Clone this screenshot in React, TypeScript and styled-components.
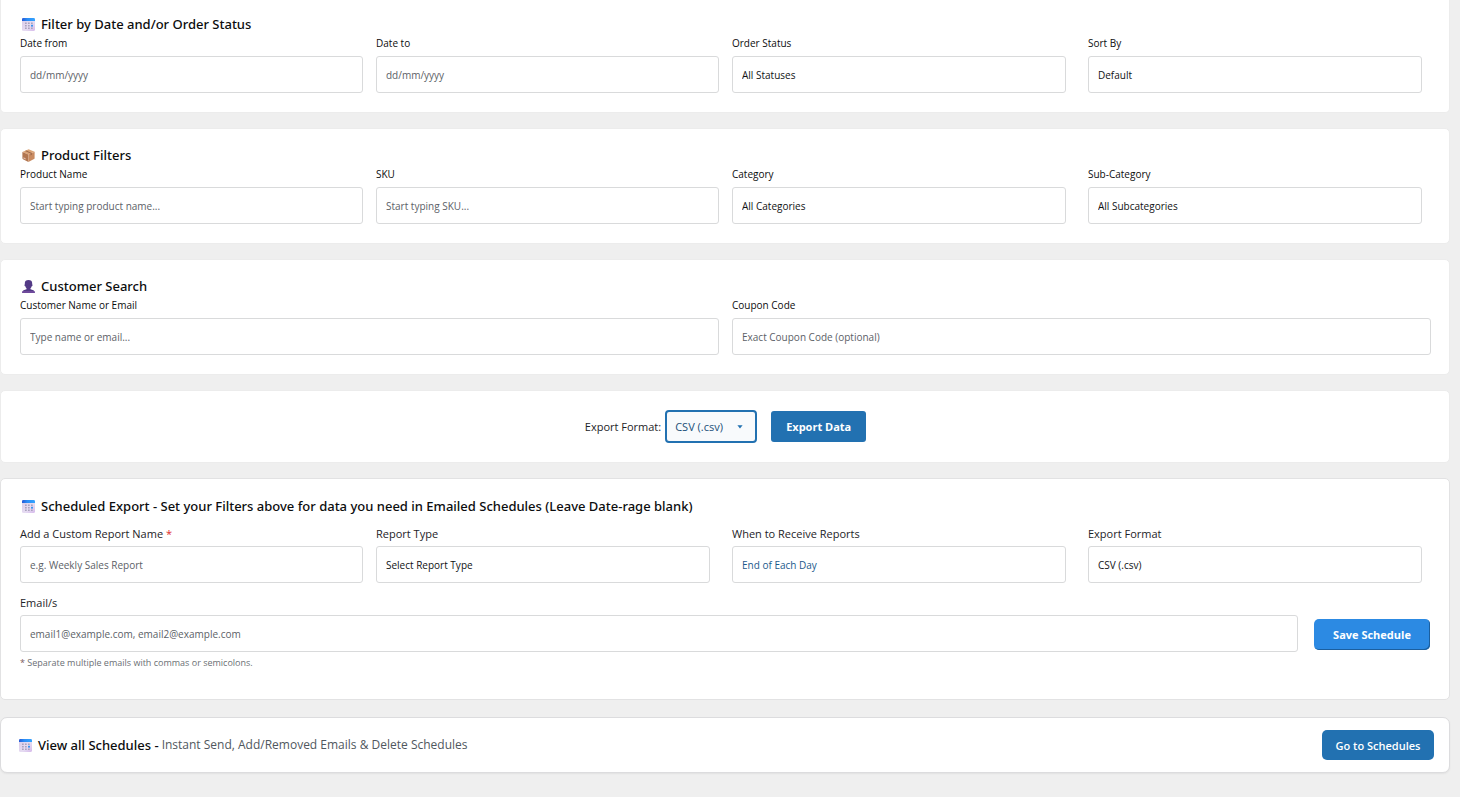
import React, { useId } from "react";
import styled, { createGlobalStyle, css } from "styled-components";

const GlobalStyle = createGlobalStyle`
  *, *::before, *::after { box-sizing: border-box; }
  body {
    margin: 0;
    background: #efefef;
    color: #1d2327;
    font-family: "Segoe UI", "Open Sans", "Noto Sans", sans-serif;
    font-size: 11px;
  }
  button, input, select { font-family: inherit; margin: 0; }
`;

const Page = styled.main`
  display: flex;
  flex-direction: column;
  gap: 15px;
  padding: 0 10px 24px 0;
`;

const Card = styled.section<{ $first?: boolean; $outlined?: boolean }>`
  border: 1px solid ${(p) => (p.$outlined ? "#e2e2e3" : "#ececec")};
  border-radius: 5px;
  background: #fff;
  padding: 16px 18px 19px 19px;
  ${(p) =>
    p.$first &&
    css`
      border-top: 0;
      border-top-left-radius: 0;
      border-top-right-radius: 0;
      padding-top: 14px;
    `}
`;

const ScheduleCard = styled(Card)`
  padding-top: 17px;
  padding-bottom: 28px;
`;

const ExportCard = styled(Card)`
  display: flex;
  align-items: center;
  justify-content: center;
  padding-top: 19px;
`;

const LinkCard = styled.section`
  display: flex;
  align-items: center;
  justify-content: space-between;
  margin-top: 2px;
  padding: 12px 15px 12px 18px;
  border: 1px solid #dcdcde;
  border-radius: 7px;
  background: #fff;
  box-shadow: 0 1px 2px rgba(0, 0, 0, 0.06);
`;

const Title = styled.h2<{ $spaced?: boolean }>`
  display: flex;
  align-items: center;
  gap: 6px;
  margin: 0 0 ${(p) => (p.$spaced ? 10 : 2)}px;
  padding-left: 2px;
  color: #0c0d0e;
  font-family: "Segoe UI", "Noto Sans", sans-serif;
  font-size: 13px;
  font-weight: 500;
  line-height: 20px;
`;

const LinkTitle = styled(Title)`
  margin: 0;
  padding: 0;
`;

const Summary = styled.div`
  display: flex;
  align-items: center;
  gap: 3px;
`;

const Note = styled.span`
  color: #50575e;
  font-size: 12px;
  line-height: 20px;
`;

const Grid = styled.div<{ $cols: number }>`
  display: grid;
  grid-template-columns: repeat(${(p) => p.$cols}, minmax(0, 1fr));
  gap: 13px;
`;

const EmailRow = styled.div`
  display: flex;
  align-items: flex-start;
  gap: 16px;
  margin-top: 12px;
`;

const FieldBox = styled.div`
  display: flex;
  flex-direction: column;
  flex: 1;
  min-width: 0;
`;

const Label = styled.label<{ $large?: boolean }>`
  margin-bottom: ${(p) => (p.$large ? 4 : 6)}px;
  color: ${(p) => (p.$large ? "#1d2327" : "#0c0d0e")};
  font-size: ${(p) => (p.$large ? 11 : 10)}px;
  font-weight: 500;
  line-height: ${(p) => (p.$large ? 16 : 14)}px;
`;

const Required = styled.span`
  color: #e02b2b;
`;

const control = css`
  height: 37px;
  padding: 0 9px;
  border: 1px solid #d9dadb;
  border-radius: 3px;
  background: #fff;
  font-size: 10px;
`;

const Input = styled.input`
  ${control}
  width: 100%;
  &::placeholder {
    color: #5c6167;
    opacity: 1;
  }
`;

const Select = styled.select<{ $accent?: boolean }>`
  ${control}
  appearance: none;
  width: calc(100% - 9px);
  color: ${(p) => (p.$accent ? "#1c5a8c" : "#101214")};
`;

const Help = styled.small`
  margin-top: 3px;
  color: #6b6f74;
  font-size: 9px;
  line-height: 16px;
`;

const Star = styled.span`
  color: #7a5a5a;
`;

const InlineLabel = styled.label`
  margin-right: 4px;
  font-weight: 500;
`;

const FormatWrap = styled.div`
  display: grid;
  align-items: center;
  margin-right: 14px;
  > * {
    grid-area: 1 / 1;
  }
  > svg {
    justify-self: end;
    margin-right: 14px;
    pointer-events: none;
  }
`;

const FormatSelect = styled.select`
  appearance: none;
  width: 92px;
  height: 33px;
  padding: 0 8px;
  border: 2px solid #2271b1;
  border-radius: 4px;
  background: #f8fafc;
  color: #1a4f78;
  font-size: 11px;
`;

const Button = styled.button`
  height: 31px;
  padding: 0;
  border: 0;
  border-radius: 3px;
  background: #2271b1;
  color: #fff;
  font-size: 11px;
  font-weight: 700;
  white-space: nowrap;
`;

const ExportButton = styled(Button)`
  width: 95px;
`;

const SaveButton = styled(Button)`
  width: 116px;
  margin: 24px 1px 0 0;
  border-radius: 5px;
  background: #2c8ae3;
  box-shadow: inset -1px -1px 0 #1b5f9f;
`;

const GoButton = styled(Button)`
  width: 112px;
  height: 30px;
  border-radius: 5px;
  font-weight: 600;
`;

const CalendarIcon = () => {
  const id = useId();
  return (
    <svg width="13" height="13" viewBox="0 0 13 13" aria-hidden="true">
      <defs>
        <linearGradient id={id} x1="0" y1="0" x2="1" y2="0">
          <stop offset="0" stopColor="#2759d6" />
          <stop offset="0.4" stopColor="#2b8df5" />
          <stop offset="1" stopColor="#35a4ff" />
        </linearGradient>
        <linearGradient id={id + "b"} x1="0" y1="0" x2="1" y2="1">
          <stop offset="0" stopColor="#d9cbe8" />
          <stop offset="0.6" stopColor="#e6dcf2" />
          <stop offset="1" stopColor="#d5b8ea" />
        </linearGradient>
      </defs>
      <rect width="13" height="13" rx="1.6" fill={`url(#${id}b)`} />
      <path d="M0 3V1.4A1.4 1.4 0 0 1 1.4 0H11.6A1.4 1.4 0 0 1 13 1.4V3Z" fill={`url(#${id})`} />
      <g fill="#aaa2bd">
        <path d="M3 4.4h1.7v1.5H3zM6 4.4h1.7v1.5H6zM3 6.9h1.7v1.5H3zM6 6.9h1.7v1.5H6zM3 9.4h1.7v1.5H3zM6 9.4h1.7v1.5H6zM9 4.4h1.7v1.5H9zM9 9.4h1.7v1.5H9z" />
      </g>
      <rect x="9" y="6.8" width="2" height="1.8" fill="#3b93ee" />
    </svg>
  );
};

const BoxIcon = () => (
  <svg width="13" height="13" viewBox="0 0 13 13" aria-hidden="true">
    <path d="M6.6 0.2 12.6 2.8 6.4 5.6 0.4 3Z" fill="#dba477" />
    <path d="M0.4 3 6.4 5.6V12.9L1 10.2Q0.4 9.9 0.4 9.2Z" fill="#b27650" />
    <path d="M12.6 2.8 6.4 5.6V12.9L12 10.1Q12.6 9.8 12.6 9.2Z" fill="#c98b61" />
    <path d="M3 1.9 4.2 1.4 9.8 4V5.8L8.6 6.4V4.6Z" fill="#9a6649" />
    <path d="M1.4 8.2 3.6 9.2V10.6L1.4 9.6Z" fill="#dcc0b4" />
  </svg>
);

const PersonIcon = () => (
  <svg width="13" height="13" viewBox="0 0 13 13" aria-hidden="true">
    <path
      d="M6.5 0C8.8 0 10.2 1.2 10.2 3.2L10.1 4.3Q10.8 4.6 10.5 5.4Q10.3 6.1 9.7 6.2Q9.3 7.6 8.5 8.3V9.2L11.4 10.3Q12.8 10.9 12.8 13H0.2Q0.2 10.9 1.6 10.3L4.5 9.2V8.3Q3.7 7.6 3.3 6.2Q2.7 6.1 2.5 5.4Q2.2 4.6 2.9 4.3L2.8 3.2C2.8 1.2 4.2 0 6.5 0Z"
      fill="#533a86"
    />
    <path d="M0.2 13Q0.3 11.7 0.9 11H12.1Q12.7 11.7 12.8 13Z" fill="#6f4a9c" />
  </svg>
);

const Caret = () => (
  <svg width="6" height="4" viewBox="0 0 6 4" aria-hidden="true">
    <path d="M0.4 0.3H5.6L3 3.5Z" fill="#2271b1" />
  </svg>
);

type FieldProps = {
  label: string;
  placeholder?: string;
  option?: string;
  required?: boolean;
  large?: boolean;
  accent?: boolean;
  help?: React.ReactNode;
};

const Field = ({ label, placeholder, option, required, large, accent, help }: FieldProps) => {
  const id = useId();
  return (
    <FieldBox>
      <Label htmlFor={id} $large={large}>
        {label}
        {required && <Required> *</Required>}
      </Label>
      {option ? (
        <Select id={id} $accent={accent}>
          <option>{option}</option>
        </Select>
      ) : (
        <Input id={id} type="text" placeholder={placeholder} />
      )}
      {help}
    </FieldBox>
  );
};

export default function App() {
  return (
    <>
      <GlobalStyle />
      <Page>
        <Card $first>
          <Title><CalendarIcon />Filter by Date and/or Order Status</Title>
          <Grid $cols={4}>
            <Field label="Date from" placeholder="dd/mm/yyyy" />
            <Field label="Date to" placeholder="dd/mm/yyyy" />
            <Field label="Order Status" option="All Statuses" />
            <Field label="Sort By" option="Default" />
          </Grid>
        </Card>

        <Card>
          <Title><BoxIcon />Product Filters</Title>
          <Grid $cols={4}>
            <Field label="Product Name" placeholder="Start typing product name..." />
            <Field label="SKU" placeholder="Start typing SKU..." />
            <Field label="Category" option="All Categories" />
            <Field label="Sub-Category" option="All Subcategories" />
          </Grid>
        </Card>

        <Card>
          <Title><PersonIcon />Customer Search</Title>
          <Grid $cols={2}>
            <Field label="Customer Name or Email" placeholder="Type name or email..." />
            <Field label="Coupon Code" placeholder="Exact Coupon Code (optional)" />
          </Grid>
        </Card>

        <ExportCard>
          <InlineLabel htmlFor="export-format">Export Format:</InlineLabel>
          <FormatWrap>
            <FormatSelect id="export-format">
              <option>CSV (.csv)</option>
            </FormatSelect>
            <Caret />
          </FormatWrap>
          <ExportButton type="button">Export Data</ExportButton>
        </ExportCard>

        <ScheduleCard $outlined>
          <Title $spaced>
            <CalendarIcon />
            Scheduled Export - Set your Filters above for data you need in Emailed Schedules (Leave Date-rage blank)
          </Title>
          <Grid $cols={4}>
            <Field large required label="Add a Custom Report Name" placeholder="e.g. Weekly Sales Report" />
            <Field large label="Report Type" option="Select Report Type" />
            <Field large accent label="When to Receive Reports" option="End of Each Day" />
            <Field large label="Export Format" option="CSV (.csv)" />
          </Grid>
          <EmailRow>
            <Field
              large
              label="Email/s"
              placeholder="email1@example.com, email2@example.com"
              help={<Help><Star>*</Star> Separate multiple emails with commas or semicolons.</Help>}
            />
            <SaveButton type="button">Save Schedule</SaveButton>
          </EmailRow>
        </ScheduleCard>

        <LinkCard>
          <Summary>
            <LinkTitle><CalendarIcon />View all Schedules -</LinkTitle>
            <Note>Instant Send, Add/Removed Emails &amp; Delete Schedules</Note>
          </Summary>
          <GoButton type="button">Go to Schedules</GoButton>
        </LinkCard>
      </Page>
    </>
  );
}
